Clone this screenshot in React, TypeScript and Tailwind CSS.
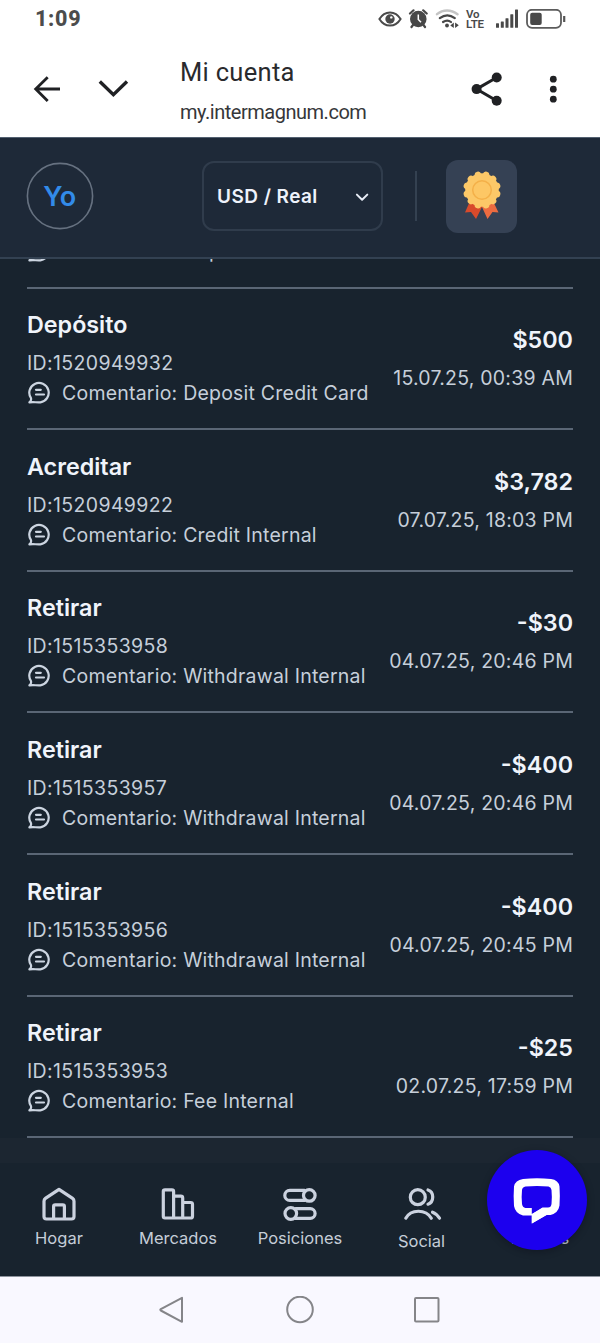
import React from "react";

type Movement = { kind: string; id: string; comment: string; amount: string; date: string };

const movements: Movement[] = [
  { kind: "Depósito", id: "1520949932", comment: "Deposit Credit Card", amount: "$500", date: "15.07.25, 00:39 AM" },
  { kind: "Acreditar", id: "1520949922", comment: "Credit Internal", amount: "$3,782", date: "07.07.25, 18:03 PM" },
  { kind: "Retirar", id: "1515353958", comment: "Withdrawal Internal", amount: "-$30", date: "04.07.25, 20:46 PM" },
  { kind: "Retirar", id: "1515353957", comment: "Withdrawal Internal", amount: "-$400", date: "04.07.25, 20:46 PM" },
  { kind: "Retirar", id: "1515353956", comment: "Withdrawal Internal", amount: "-$400", date: "04.07.25, 20:45 PM" },
  { kind: "Retirar", id: "1515353953", comment: "Fee Internal", amount: "-$25", date: "02.07.25, 17:59 PM" },
];

function CommentIcon() {
  return (
    <svg className="h-6 w-6 shrink-0" viewBox="0 0 24 24" fill="none" stroke="#ccd5e1" strokeWidth="2.200" strokeLinecap="round" strokeLinejoin="round">
      <path d="M1.400 21.400Q3.600 19.600 3 17.200A9.700 9.700 0 1 1 12.400 21.300C8 21.500 5 20.800 1.400 21.400Z" />
      <path d="M8 8.800h4.800M8 13.500h8" />
    </svg>
  );
}

function StatusBar() {
  return (
    <div className="flex h-[37px] items-center justify-between pl-[35px] pr-[34px]">
      <span className="font-['Roboto',sans-serif] text-[21.500px] font-extrabold leading-none tracking-[0.700px] text-[#4c4c4c]">1:09</span>
      <div className="flex items-center">
        <svg className="h-[18px] w-6" viewBox="378 10 24 18" fill="none">
          <path d="M379.400 19c5.300-8.800 15.900-8.800 21.200 0c-5.300 8.800-15.900 8.800-21.200 0Z" stroke="#4a4a4a" strokeWidth="2" />
          <circle cx="390" cy="19" r="4.700" fill="#4a4a4a" />
          <circle cx="391.300" cy="17.400" r="1.200" fill="#fff" />
        </svg>
        <svg className="ml-[6px] h-5 w-[21px]" viewBox="408 9 21 20" fill="none">
          <circle cx="418.300" cy="19" r="8.300" fill="#474747" />
          <path d="m410 13.500 3.500-3.200m13.200 3.200-3.500-3.200M413 25l-1.500 2m12-2 1.500 2" stroke="#474747" strokeWidth="2.200" strokeLinecap="round" />
          <path d="M418.300 14.500v5l2.700 2.800" stroke="#fff" strokeWidth="1.500" />
        </svg>
        <svg className="ml-[6px] h-5 w-6" viewBox="435 9 24 20" fill="none" strokeLinecap="round">
          <path d="M437 14.200c6-5 14-5 20.500 0" stroke="#c4c4c4" strokeWidth="2.400" />
          <path d="M439.800 18.200c5-3.800 10-3.800 15 0M443 22c3-2 5.500-2 8 0" stroke="#474747" strokeWidth="2.200" />
          <circle cx="447" cy="25.500" r="1.900" fill="#474747" />
          <path d="m453.800 22.500-3.500 3 3.500 2.600Zm1.300 0v5.600l3.700-2.800Z" fill="#474747" />
        </svg>
        <div className="ml-[7px] flex w-[19px] flex-col font-['Roboto',sans-serif] text-[11.500px] font-semibold leading-[10px] tracking-[-0.200px] text-[#4a4a4a]">
          <span>Vo</span>
          <span>LTE</span>
        </div>
        <svg className="ml-[10px] h-5 w-[23px]" viewBox="495 9 23 20" fill="#494949">
          <rect x="496" y="23.300" width="3" height="4.500" rx=".5" />
          <rect x="500.800" y="21.500" width="3" height="6.300" rx=".5" />
          <rect x="505.500" y="18.200" width="3" height="9.600" rx=".5" />
          <rect x="510.300" y="14.200" width="3" height="13.600" rx=".5" />
          <rect x="515" y="9.500" width="3" height="18.300" rx=".5" />
        </svg>
        <svg className="ml-2 h-5 w-10" viewBox="526 8.500 40 20" fill="none">
          <rect x="527" y="9.300" width="34" height="18" rx="5" stroke="#5c5c5c" strokeWidth="1.800" />
          <rect x="530.200" y="12.200" width="11.500" height="12.200" rx="2" fill="#484848" />
          <path d="M564.200 15.500v6" stroke="#555" strokeWidth="2.200" />
        </svg>
      </div>
    </div>
  );
}

function BrowserBar() {
  return (
    <div className="flex h-[100px] pl-8">
      <svg className="mt-[38px] h-7 w-[30px]" viewBox="32 75 30 28" fill="none" stroke="#202124" strokeWidth="2.800">
        <path d="M60 89H36M47.700 77.200 35.700 89l12 12" />
      </svg>
      <svg className="ml-9 mt-[38px] h-7 w-8" viewBox="98 75 32 28" fill="none" stroke="#202124" strokeWidth="3.400">
        <path d="m99.800 81.500 13.600 13.200L127 81.500" />
      </svg>
      <div className="ml-[50px] flex w-[280px] flex-col whitespace-nowrap pt-[18px] font-['Roboto',sans-serif] text-[#292a2d]">
        <span className="text-[25.500px] leading-[34px] tracking-[0.300px]">Mi cuenta</span>
        <span className="mt-[7px] text-[20px] leading-[32px] tracking-[-0.480px] text-[#36373a]">my.intermagnum.com</span>
      </div>
      <svg className="ml-[9px] mt-[34px] h-9 w-9" viewBox="469 71 36 36" fill="#202124">
        <path d="m496.700 77.500-20.200 11.600 20.200 11.700" fill="none" stroke="#202124" strokeWidth="3" />
        <circle cx="476.600" cy="89.100" r="5" />
        <circle cx="496.700" cy="77.500" r="5" />
        <circle cx="496.700" cy="100.700" r="5" />
      </svg>
      <svg className="ml-[42px] mt-[34px] h-9 w-3" viewBox="547 71 12 36" fill="#202124">
        <circle cx="553.300" cy="79.200" r="3.400" />
        <circle cx="553.300" cy="89.200" r="3.400" />
        <circle cx="553.300" cy="99.200" r="3.400" />
      </svg>
    </div>
  );
}

function Medal() {
  return (
    <svg className="h-[50px] w-10" viewBox="0 0 40 50">
      <path d="M8 30 3 41.500l6-.5 5 7 6.500-13Z" fill="#d84a2b" />
      <path d="m31 30 5.500 11.500-6-.5-5 7-6-13Z" fill="#ec6b40" />
      <g fill="#fcc868">
        <circle cx="20" cy="19" r="16.800" />
        {[0, 30, 60, 90, 120, 150, 180, 210, 240, 270, 300, 330].map((a) => (
          <circle key={a} cx="20" cy="3.400" r="3.300" transform={`rotate(${a + 15} 20 19)`} />
        ))}
      </g>
      <circle cx="20" cy="19" r="9.300" fill="#fdc765" stroke="#f4b049" strokeWidth="1.500" />
    </svg>
  );
}

function AppHeader() {
  return (
    <header className="flex h-[122px] items-center border-b-2 border-t border-b-[#334152] border-t-[#526070] bg-[#1e2938] pb-[3px] pl-[26px]">
      <svg className="h-[68px] w-[68px]" viewBox="0 0 68 68">
        <circle cx="34" cy="34" r="32.600" fill="none" stroke="#667180" strokeWidth="1.600" />
        <text x="33.700" y="43.500" textAnchor="middle" fontSize="27" fontWeight="600" fill="#328be9">Yo</text>
      </svg>
      <div className="ml-[108px] flex h-[70px] w-[181px] items-center justify-between rounded-xl border-2 border-[#303c4c] pl-[13px] pr-[11px] pt-[2px] text-[19px] font-semibold tracking-[0.450px] text-[#eef2fb]">
        <span className="whitespace-nowrap">USD / Real</span>
        <svg className="h-4 w-4" viewBox="0 0 16 16" fill="none" stroke="#e8edf6" strokeWidth="2" strokeLinecap="round" strokeLinejoin="round"><path d="m2.900 5.600 5.200 5.200 5.200-5.200" /></svg>
      </div>
      <div className="ml-8 h-[50px] w-[2px] bg-[#344151]" />
      <div className="ml-[29px] flex h-[73px] w-[71px] items-center justify-center rounded-xl bg-[#354154]">
        <Medal />
      </div>
    </header>
  );
}

function MovementRow({ item }: { item: Movement }) {
  return (
    <li className="flex h-[141.670px] justify-between border-b-2 border-[#5a6675] text-[19.500px] tracking-[0.220px] text-[#c6cfda]">
      <div className="flex flex-col whitespace-nowrap pt-[16.500px]">
        <span className="text-[23.300px] font-semibold leading-[40px] tracking-normal text-[#f0f4fb]">{item.kind}</span>
        <span className="mt-[3px] leading-[30px] tracking-[0.360px]">ID:{item.id}</span>
        <span className="flex items-center gap-[10px] pl-px leading-[30px]">
          <CommentIcon />
          Comentario: {item.comment}
        </span>
      </div>
      <div className="flex flex-col whitespace-nowrap pt-[32.500px] text-right leading-[38px]">
        <span className="text-[23.300px] font-semibold tracking-normal text-[#f0f4fb]">{item.amount}</span>
        <span>{item.date}</span>
      </div>
    </li>
  );
}

function NavItem({ label, width, drop, children }: { label: string; width: string; drop?: boolean; children: React.ReactNode }) {
  return (
    <div className={`flex flex-col items-center ${width}`}>
      <svg className="h-10 w-10" viewBox="0 0 40 40" fill="none" stroke="#cbd2df" strokeWidth="3.200" strokeLinecap="round" strokeLinejoin="round">{children}</svg>
      <span className={`whitespace-nowrap text-[16.500px] leading-[24px] text-[#c5cdd8] ${drop ? "mt-[4px]" : "mt-px"}`}>{label}</span>
    </div>
  );
}

function BottomNav() {
  return (
    <nav className="relative flex h-[113px] bg-[#18232e] pt-[22px]">
      <NavItem label="Hogar" width="w-[118px]">
        <path d="M5 16.300c0-1.300.4-2.200 1.400-2.900L20 4.300l13.600 9.100c1 .7 1.400 1.600 1.400 2.900v15.200c0 1.700-.9 2.500-2.500 2.500H7.500c-1.600 0-2.500-.8-2.500-2.500Z" />
        <path d="M14.600 33.500v-12c0-1.100.6-1.700 1.700-1.700h7.400c1.100 0 1.700.6 1.700 1.700v12" />
      </NavItem>
      <NavItem label="Mercados" width="w-[120px]">
        <path d="M5.300 6.500c0-1 .6-1.700 1.700-1.700h6.900c1 0 1.700.6 1.700 1.700v26.500H7c-1.100 0-1.700-.6-1.700-1.700ZM15.600 11.200h7.200c1.300 0 1.900.6 1.900 1.800v20h-9.100M24.700 17.500h7.900c1.300 0 1.900.6 1.900 1.800v11.900c0 1.200-.6 1.800-1.900 1.800h-7.900" />
      </NavItem>
      <NavItem label="Posiciones" width="w-[124px]">
        <path d="M24.500 15.400H9.800a5 5 0 0 1 0-10h14.700M15.500 23.600h14.700a4.900 4.900 0 0 1 0 9.800H15.500" />
        <circle cx="29.300" cy="10.400" r="5.800" />
        <circle cx="10.800" cy="28.500" r="5.800" />
      </NavItem>
      <NavItem label="Social" width="w-[119px]" drop>
        <circle cx="15.800" cy="12.200" r="7.500" />
        <path d="M26 5c6.300 2 6.300 12.200 0 14.200M3.800 33.200c5-9.300 20-9.300 25.500 0M30.500 27.200c3.300 1.200 5.300 3.300 7 6" />
      </NavItem>
      <NavItem label="Ajustes" width="w-[119px]">
        <circle cx="20" cy="20" r="14" />
      </NavItem>
      <div className="absolute left-[486.500px] top-[-13.500px] flex h-[100px] w-[100px] items-center justify-center rounded-full bg-[#1c00ee] shadow-[0_2px_7px_rgba(10,10,20,0.350)]">
        <svg className="h-[50px] w-[50px]" viewBox="0 0 50 50">
          <path d="M11 4Q25 2.500 39 4 46.500 5 47.500 11.500q.7 10 0 19-1.200 7.500-9 9.500H34.500L19.800 48.500V40.500H11Q3.300 38.500 2 31q-.7-10 0-19.500Q3.200 5.200 11 4Z" fill="#fff" />
          <path d="M13.500 11.500q11.500-.8 23 0 2.700.5 3 3.500.7 7 0 14-.5 3.300-3.500 4H30.500L19.800 39v-6H13.500q-3-.5-3.500-4-.7-7 0-14 .3-3 3.500-3.500Z" fill="#1c00ee" />
          <path d="M19.800 48.500V39.200L30.500 32.500H39L34.500 40Z" fill="#fff" />
        </svg>
      </div>
    </nav>
  );
}

export default function App() {
  return (
    <div className="flex h-[1343px] w-[600px] flex-col overflow-hidden bg-white font-['Inter',sans-serif]">
      <StatusBar />
      <BrowserBar />
      <AppHeader />
      <main className="h-[904px] overflow-hidden bg-[#18232e] px-[27px]">
        <div className="flex h-[29.500px] items-start overflow-hidden border-b-2 border-[#5a6675]">
          <div className="-mt-[23px] flex items-center gap-[10px] whitespace-nowrap pl-px text-[19.500px] leading-[30px] tracking-[0.220px] text-[#c6cfda]">
            <CommentIcon />
            Comentario: Deposit Credit Card
          </div>
        </div>
        <ul>
          {movements.map((m) => (
            <MovementRow key={m.id} item={m} />
          ))}
        </ul>
        <div className="-mx-[27px] h-7 bg-[#1c2631]" />
      </main>
      <BottomNav />
      <footer className="flex h-[67px] items-center border-t border-[#8d939d] bg-[#f9f8ff]">
        <svg className="ml-[158px] h-7 w-7" viewBox="158 1296 28 28" fill="none" stroke="#858589" strokeWidth="2" strokeLinejoin="round"><path d="M182 1297.800v24L160.800 1310.500q-1-.7 0-1.400Z" /></svg>
        <svg className="ml-[100px] h-7 w-7" viewBox="286 1296 28 28" fill="none" stroke="#858589" strokeWidth="2"><circle cx="300" cy="1309.500" r="12.800" /></svg>
        <svg className="ml-[99px] h-7 w-7" viewBox="413 1296 28 28" fill="none" stroke="#858589" strokeWidth="2"><rect x="415" y="1298" width="23.500" height="23.500" rx="1" /></svg>
      </footer>
    </div>
  );
}
